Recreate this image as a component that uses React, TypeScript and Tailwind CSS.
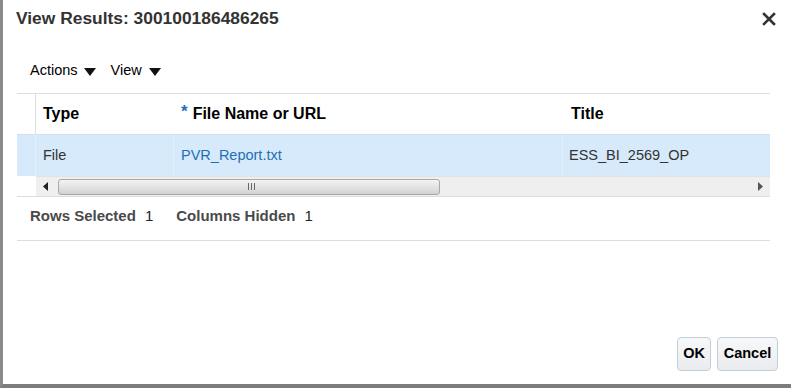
export default function App() {
  return (
    <div className="w-[791px] h-[388px] bg-white flex flex-col border-l-[3px] border-l-[#8a8a8a] border-b-[4px] border-b-[#7d7d7d] font-['Liberation_Sans',Arial,sans-serif] text-[#333] overflow-hidden">
      {/* Title bar */}
      <div className="flex items-center justify-between h-[36px] pl-[13px] pr-[15px]">
        <h1 className="text-[17.4px] font-bold text-[#333] leading-none mt-[1px]">
          View Results: 300100186486265
        </h1>
        <svg width="14" height="14" viewBox="0 0 14 14" className="mt-[1px]">
          <path d="M2 2 L12 12 M12 2 L2 12" stroke="#333" strokeWidth="2.6" strokeLinecap="square" />
        </svg>
      </div>

      {/* Toolbar */}
      <div className="flex items-center h-[22px] mt-[24px] pl-[27px] text-[14.5px] text-black">
        <span>Actions</span>
        <svg width="12" height="9" viewBox="0 0 12 9" className="ml-[6px] mt-[2px]">
          <path d="M0 0 H12 L6 8 Z" fill="#111" />
        </svg>
        <span className="ml-[15px]">View</span>
        <svg width="12" height="9" viewBox="0 0 12 9" className="ml-[7px] mt-[2px]">
          <path d="M0 0 H12 L6 8 Z" fill="#111" />
        </svg>
      </div>

      {/* Table */}
      <div className="ml-[14px] w-[753px] mt-[11px] border-t border-[#d6dfe6]">
        <div className="flex h-[41px] border-b border-[#d6dfe6] text-[16px] font-bold text-black">
          <div className="w-[19px] border-r border-[#d6dfe6]" />
          <div className="w-[138px] flex items-center pl-[7px]">Type</div>
          <div className="w-[389px] flex items-center pl-[7px]">
            <span className="text-[#1f6fb5] text-[17px] mr-[5px] -mt-[5px]">*</span>
            File Name or URL
          </div>
          <div className="flex-1 flex items-center pl-[8px]">Title</div>
        </div>
        <div className="flex h-[41px] bg-[#d7eafb] text-[14.5px]">
          <div className="w-[19px] border-r border-[#e2f0fc]" />
          <div className="w-[138px] flex items-center pl-[7px] border-r border-[#e2f0fc] text-[#333]">File</div>
          <div className="w-[389px] flex items-center pl-[7px] border-r border-[#e2f0fc] text-[#1f6fb5]">
            PVR_Report.txt
          </div>
          <div className="flex-1 flex items-center pl-[6px] text-[#333]">ESS_BI_2569_OP</div>
        </div>

        {/* Horizontal scrollbar */}
        <div className="flex h-[21px] border-b border-[#d6dfe6]">
          <div className="w-[19px] bg-white" />
          <div className="flex-1 flex items-center bg-[#efefef] border-t border-[#e2e2e2]">
            <svg width="8" height="9" viewBox="0 0 8 9" className="ml-[6px]">
              <path d="M6 0 V9 L1 4.5 Z" fill="#222" />
            </svg>
            <div className="ml-[8px] w-[382px] h-[16px] rounded-[3px] border border-[#a8a8a8] bg-gradient-to-b from-[#f4f4f4] to-[#d2d2d2] flex items-center justify-center">
              <span className="flex gap-[2px] ml-[4px]">
                <span className="w-[1px] h-[7px] bg-[#666]" />
                <span className="w-[1px] h-[7px] bg-[#666]" />
                <span className="w-[1px] h-[7px] bg-[#666]" />
              </span>
            </div>
            <div className="flex-1" />
            <svg width="8" height="9" viewBox="0 0 8 9" className="mr-[6px]">
              <path d="M2 0 V9 L7 4.5 Z" fill="#555" />
            </svg>
          </div>
        </div>

        {/* Status */}
        <div className="flex items-center h-[44px] pb-[4px] pl-[13px] text-[15px] border-b border-[#d6dfe6]">
          <span className="font-bold text-[#4a4a4a]">Rows Selected</span>
          <span className="ml-[9px] text-[#222]">1</span>
          <span className="ml-[23px] font-bold text-[#4a4a4a]">Columns Hidden</span>
          <span className="ml-[9px] text-[#222]">1</span>
        </div>
      </div>

      <div className="flex-1" />

      {/* Buttons */}
      <div className="flex justify-end gap-[6px] pr-[13px] mb-[13px]">
        <button className="w-[34px] h-[34px] rounded-[4px] border border-[#c4ced7] bg-gradient-to-b from-[#f7f8f9] to-[#e9ecef] text-[14.5px] font-bold text-black">
          OK
        </button>
        <button className="w-[61px] h-[34px] rounded-[4px] border border-[#c4ced7] bg-gradient-to-b from-[#f7f8f9] to-[#e9ecef] text-[14.5px] font-bold text-black">
          Cancel
        </button>
      </div>
    </div>
  );
}
